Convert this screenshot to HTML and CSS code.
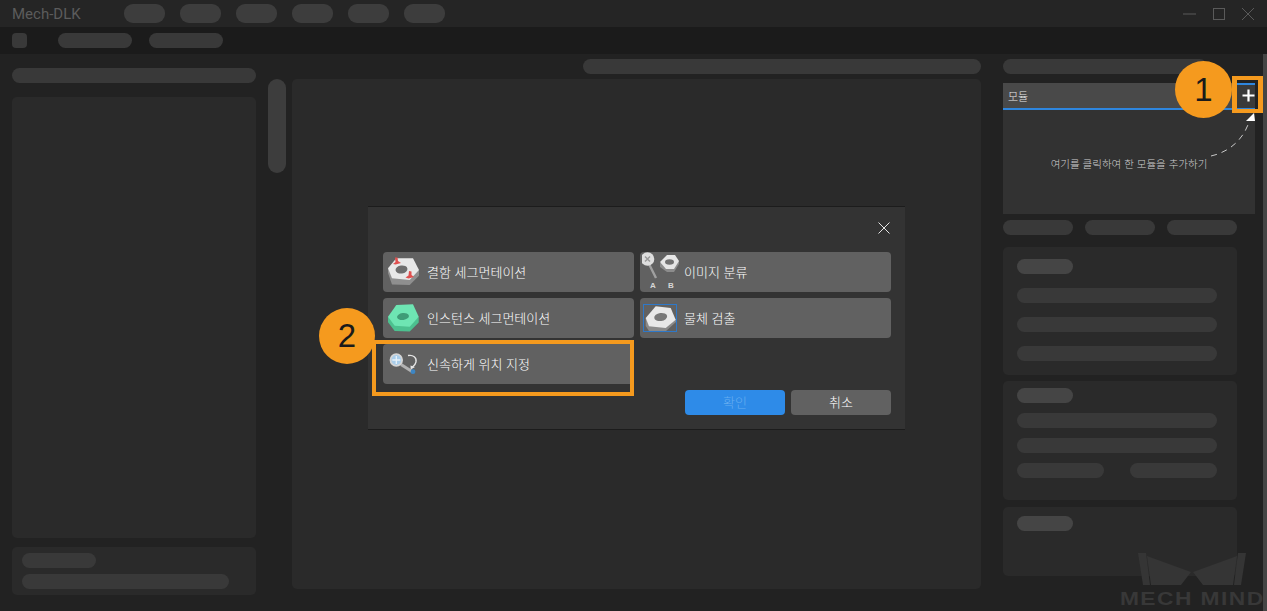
FILE: index.html
```html
<!DOCTYPE html>
<html lang="ko">
<head>
    <meta charset="UTF-8">
    <meta name="viewport" content="width=device-width, initial-scale=1.0">
    <title>Mech-DLK</title>
    <link rel="stylesheet" href="styles.css">
</head>
<body>
    <div class="app">
        <header class="titlebar">
            <span class="app-name">Mech-DLK</span>
            <nav class="menu">
                <span class="pill menu-item"></span>
                <span class="pill menu-item"></span>
                <span class="pill menu-item"></span>
                <span class="pill menu-item"></span>
                <span class="pill menu-item"></span>
                <span class="pill menu-item"></span>
            </nav>
            <div class="window-controls">
                <svg width="16" height="16" viewBox="0 0 16 16"><path d="M1 8h13" stroke="#5a5a5a" stroke-width="1"/></svg>
                <svg width="16" height="16" viewBox="0 0 16 16"><rect x="2.5" y="2.5" width="11" height="11" fill="none" stroke="#5a5a5a"/></svg>
                <svg width="16" height="16" viewBox="0 0 16 16"><path d="M2 2l12 12M14 2L2 14" stroke="#5a5a5a" stroke-width="1"/></svg>
            </div>
        </header>

        <div class="toolbar">
            <span class="tool-square"></span>
            <span class="pill tool-pill first"></span>
            <span class="pill tool-pill"></span>
        </div>

        <main class="workspace">
            <aside class="left-col">
                <span class="pill left-title"></span>
                <div class="panel left-main"></div>
                <div class="panel left-foot">
                    <span class="pill foot-short"></span>
                    <span class="pill foot-long"></span>
                </div>
            </aside>

            <div class="scroll-col"><span class="scroll-thumb"></span></div>

            <section class="center-col">
                <span class="pill center-title"></span>
                <div class="panel center-main"></div>
            </section>

            <aside class="right-col">
                <span class="pill right-title"></span>
                <div class="module-panel">
                    <div class="module-head">
                        <span class="module-label">모듈</span>
                        <span class="add-btn">
                            <svg width="13" height="13" viewBox="0 0 13 13"><path d="M6.5 0.5v12M0.5 6.5h12" stroke="#fff" stroke-width="2.2"/></svg>
                        </span>
                    </div>
                    <div class="module-body">
                        <p class="module-hint">여기를 클릭하여 한 모듈을 추가하기</p>
                    </div>
                    <svg class="hint-arrow" width="56" height="56" viewBox="0 0 56 56">
                        <path d="M12 46C30 42 44 30 50 12" fill="none" stroke="#c9c9c9" stroke-width="1" stroke-dasharray="6 5"/>
                        <path d="M47 11l8-8 1 8z" fill="#fff"/>
                    </svg>
                </div>
                <div class="tabs">
                    <span class="pill tab"></span>
                    <span class="pill tab"></span>
                    <span class="pill tab"></span>
                </div>
                <div class="card card-one">
                    <span class="pill card-title"></span>
                    <span class="pill card-line"></span>
                    <span class="pill card-line"></span>
                    <span class="pill card-line"></span>
                </div>
                <div class="card card-two">
                    <span class="pill card-title"></span>
                    <span class="pill card-line"></span>
                    <span class="pill card-line"></span>
                    <div class="card-split">
                        <span class="pill split-a"></span>
                        <span class="pill split-b"></span>
                    </div>
                </div>
                <div class="card card-three">
                    <span class="pill card-title"></span>
                </div>
            </aside>
            <div class="edge-strip"></div>
        </main>

        <!-- 워터마크 -->
        <div class="watermark">
            <svg width="108" height="32" viewBox="0 0 108 32">
                <path d="M0 0l8 0 4 32H5zM9 3l44 16-10 13H13zM108 0h-8l-4 32h7zM99 3L55 19l10 13h30z" fill="#353535"/>
            </svg>
            <span class="watermark-text">MECH MIND</span>
        </div>

        <div class="dialog">
            <button class="dialog-close" aria-label="close">
                <svg width="14" height="14" viewBox="0 0 14 14"><path d="M1.5 1.5l11 11M12.5 1.5l-11 11" stroke="#e4e4e4" stroke-width="1"/></svg>
            </button>
            <div class="module-grid">
                <button class="module-btn">
                    <svg class="module-icon" width="42" height="38" viewBox="0 0 42 38">
                        <path d="M3 15v5l4 11.500 17.700.5L34 22.700V17L24 22 7 20z" fill="#8f8f8f"/>
                        <path d="M3 15.300L11.300 5.300H28L34 17 24.700 27 7 25.300z" fill="#e8e8e8"/>
                        <ellipse cx="16.500" cy="16.500" rx="6" ry="4" fill="#6e6e6e" transform="rotate(-8 16.500 16.500)"/>
                        <path d="M10 4.500l2.500 0 .5 3.500 3 2-5.500 1.500L8 11l2.500-2zM24 18l2.500.5 0 3.500 2.500 2-5.500 1.500-3-1 3-2z" fill="#e0504f"/>
                    </svg>
                    <span>결함 세그먼테이션</span>
                </button>
                <button class="module-btn">
                    <svg class="module-icon" width="42" height="40" viewBox="0 0 42 40">
                        <path d="M7 12l7 14" stroke="#a0a0a0" stroke-width="2.400"/>
                        <circle cx="5.500" cy="7" r="6.800" fill="#dedede"/>
                        <path d="M3 4.500l5 5M8 4.500l-5 5" stroke="#9a9a9a" stroke-width="1.500"/>
                        <path d="M18 11v4l7 5h7l5-8V9z" fill="#8c8c8c"/>
                        <path d="M18 10l7-7h8l4 6-5 8h-8z" fill="#e6e6e6"/>
                        <ellipse cx="27.500" cy="10" rx="4.500" ry="2.800" fill="#727272"/>
                        <text x="8" y="36" class="icon-letter">A</text>
                        <text x="26" y="36" class="icon-letter">B</text>
                    </svg>
                    <span>이미지 분류</span>
                </button>
                <button class="module-btn">
                    <svg class="module-icon" width="42" height="38" viewBox="0 0 42 38">
                        <path d="M3 17.700v5.500L9.700 32 24.700 32.500 33.700 23.500V17.700L24.700 23z" fill="#4cc08f"/>
                        <path d="M3 17.700L11.300 6 28 5.300 33.700 17.700 24.700 27.700 9.700 26.700z" fill="#6ee5b3"/>
                        <ellipse cx="18" cy="17.500" rx="6" ry="3.500" fill="#3f9c77" transform="rotate(-8 18 17.500)"/>
                    </svg>
                    <span>인스턴스 세그먼테이션</span>
                </button>
                <button class="module-btn">
                    <span class="box-icon">
                        <svg width="32" height="26" viewBox="0 0 32 26">
                            <path d="M1.700 13v8L5 26l17 0 10-9v-3L22 20 5 18z" fill="#8a8a8a"/>
                            <path d="M1.700 13L11.700 1.300 26.700 3 31.700 14.700 21.700 23 5 21.300z" fill="#e8e8e8"/>
                            <ellipse cx="16.700" cy="12" rx="6.500" ry="4" fill="#787878" transform="rotate(-8 16.700 12)"/>
                        </svg>
                    </span>
                    <span>물체 검출</span>
                </button>
                <button class="module-btn">
                    <svg class="module-icon" width="42" height="38" viewBox="0 0 42 38">
                        <path d="M16 19.500l11 7" stroke="#b2b2b2" stroke-width="3"/>
                        <circle cx="28" cy="26.700" r="2.400" fill="#3d86c4"/>
                        <circle cx="11.300" cy="15" r="5.800" fill="#a9cdea" stroke="#d5d5d5" stroke-width="1.800"/>
                        <path d="M11.300 11v8M7.300 15h8" stroke="#e8f2fa" stroke-width="1.300"/>
                        <path d="M23 10.500c5-1 9 2 8 6.500-.4 2-1.500 3.500-3.500 5" fill="none" stroke="#e6e6e6" stroke-width="1.300"/>
                        <path d="M25.500 20.500l4.500 1.500-4.300 2.600z" fill="#e6e6e6"/>
                    </svg>
                    <span>신속하게 위치 지정</span>
                </button>
            </div>
            <div class="dialog-actions">
                <button class="action-btn ok">확인</button>
                <button class="action-btn">취소</button>
            </div>
        </div>

        <span class="callout callout-one">1</span>
        <span class="outline outline-one"></span>
        <span class="callout callout-two">2</span>
        <span class="outline outline-two"></span>
    </div>
</body>
</html>
```

FILE: styles.css
```css
* {
    margin: 0;
    padding: 0;
    box-sizing: border-box;
}

html, body {
    height: 100%;
    overflow: hidden;
}

body {
    font-family: "Noto Sans CJK KR", "Noto Sans", sans-serif;
    background: #222222;
    color: #ffffff;
}

.app {
    position: relative;
    width: 1267px;
    height: 611px;
    display: flex;
    flex-direction: column;
}

.pill {
    display: block;
    height: 15px;
    border-radius: 8px;
    background: #393939;
}

/* title bar */
.titlebar {
    height: 27px;
    flex: none;
    display: flex;
    align-items: center;
    padding: 0 11px 0 12px;
    background: #252525;
}

.app-name {
    width: 112px;
    font-family: Roboto, sans-serif;
    font-size: 15px;
    color: #5c5c5c;
}

.menu {
    display: flex;
    gap: 15px;
}

.menu-item {
    width: 41px;
    height: 19px;
    border-radius: 9px;
    background: #3d3d3d;
}

.window-controls {
    margin-left: auto;
    display: flex;
    gap: 13px;
}

.toolbar {
    height: 27px;
    flex: none;
    display: flex;
    align-items: center;
    padding: 0 12px 1px;
    background: #1b1b1b;
}

.tool-square {
    width: 15px;
    height: 15px;
    border-radius: 4px;
    background: #393939;
}

.tool-pill {
    width: 74px;
    margin-left: 17px;
}

.tool-pill.first {
    margin-left: 31px;
}

/* main columns */
.workspace {
    flex: 1;
    display: flex;
    background: #222222;
}

.panel {
    background: #2a2a2a;
    border-radius: 5px;
}

.left-col {
    width: 244px;
    margin-left: 12px;
    padding-top: 14px;
    display: flex;
    flex-direction: column;
}

.left-title {
    flex: none;
}

.left-main {
    height: 441px;
    margin-top: 14px;
}

.left-foot {
    height: 48px;
    margin-top: 9px;
    padding: 6px 27px 0 10px;
    display: flex;
    flex-direction: column;
    gap: 6px;
}

.foot-short {
    width: 74px;
}

.scroll-col {
    width: 18px;
    margin-left: 12px;
    padding-top: 25px;
}

.scroll-thumb {
    display: block;
    height: 94px;
    border-radius: 9px;
    background: #3d3d3d;
}

.center-col {
    width: 689px;
    margin-left: 6px;
    padding-top: 5px;
    display: flex;
    flex-direction: column;
    align-items: flex-end;
}

.center-title {
    width: 398px;
}

.center-main {
    width: 100%;
    height: 510px;
    margin-top: 5px;
}

.right-col {
    position: relative;
    width: 252px;
    margin-left: 22px;
    padding-top: 5px;
}

.right-title {
    width: 204px;
}

.module-panel {
    position: relative;
    height: 131px;
    margin-top: 9px;
    display: flex;
    flex-direction: column;
    background: #323232;
}

.module-head {
    height: 27px;
    flex: none;
    display: flex;
    align-items: center;
    justify-content: space-between;
    padding-left: 5px;
    background: #494949;
    border-bottom: 2px solid #2e86de;
}

.module-label {
    font-size: 11px;
    font-weight: 300;
    color: #e8e8e8;
}

.add-btn {
    width: 19px;
    height: 25px;
    display: flex;
    align-items: center;
    justify-content: flex-end;
    padding: 0 0 2px;
    background: #3a3a3a;
    border-top: 2px solid #2e86de;
}

.module-body {
    flex: 1;
    display: flex;
    justify-content: center;
    padding-top: 47px;
}

.module-hint {
    font-size: 10.5px;
    font-weight: 300;
    line-height: 14px;
    color: #d0d0d0;
    white-space: nowrap;
}

.hint-arrow {
    position: absolute;
    top: 27px;
    right: 0;
}

.tabs {
    width: 234px;
    margin-top: 6px;
    display: flex;
    justify-content: space-between;
}

.tab {
    width: 70px;
}

.card {
    width: 234px;
    padding: 12px 14px 0;
    background: #2a2a2a;
    border-radius: 5px;
}

.card .pill + .pill {
    margin-top: 14px;
}

.card-title {
    width: 56px;
    background: #454545;
}

.card-line {
    width: 200px;
}

.card-one {
    height: 128px;
    margin-top: 12px;
}

.card-two {
    height: 119px;
    margin-top: 6px;
    padding-top: 7px;
}

.card-two .pill + .pill {
    margin-top: 10px;
}

.card-split {
    width: 200px;
    margin-top: 10px;
    display: flex;
    justify-content: space-between;
}

.card-two .card-split .pill {
    margin-top: 0;
}

.split-a,
.split-b {
    width: 87px;
}

.card-three {
    height: 69px;
    margin-top: 7px;
    padding-top: 9px;
}

.edge-strip {
    position: absolute;
    top: 54px;
    right: 0;
    bottom: 0;
    width: 4px;
    background: #454545;
}

/* logo in the corner */
.watermark {
    position: absolute;
    left: 1119px;
    top: 553px;
    width: 146px;
    display: flex;
    flex-direction: column;
    align-items: center;
}

.watermark-text {
    margin-top: 4px;
    font-family: "Liberation Sans", sans-serif;
    font-size: 19px;
    line-height: 20px;
    font-weight: 700;
    letter-spacing: 1.2px;
    white-space: nowrap;
    color: #383838;
    transform: scaleX(1.2);
}

/* dialog */
.dialog {
    position: absolute;
    left: 368px;
    top: 206px;
    width: 537px;
    height: 224px;
    padding: 46px 14px 0 15px;
    background: #333333;
    border-top: 1px solid #1c1c1c;
    border-bottom: 1px solid #1c1c1c;
}

.dialog-close {
    position: absolute;
    top: 14px;
    right: 14px;
    width: 14px;
    height: 14px;
    border: none;
    background: none;
}

.module-grid {
    display: grid;
    grid-template-columns: 251px 251px;
    grid-auto-rows: 40px;
    column-gap: 6px;
    row-gap: 6px;
    margin-top: -1px;
}

.module-btn {
    display: flex;
    align-items: center;
    padding-left: 2px;
    border: none;
    border-radius: 4px;
    background: #616161;
    color: #ffffff;
    font-family: inherit;
    font-size: 13px;
    font-weight: 300;
    text-align: left;
}

.module-btn > span:last-child {
    margin-bottom: 2px;
}

.module-icon {
    flex: none;
}

.icon-letter {
    font-family: "Liberation Sans", sans-serif;
    font-size: 8px;
    font-weight: 700;
    fill: #d6d6d6;
}

.box-icon {
    flex: none;
    width: 34px;
    height: 28px;
    margin: 0 7px 0 1px;
    border: 1px solid #2e78c8;
    overflow: hidden;
}

.box-icon svg {
    display: block;
}

.dialog-actions {
    margin-top: 6px;
    display: flex;
    justify-content: flex-end;
    gap: 6px;
}

.action-btn {
    width: 100px;
    height: 25px;
    padding-bottom: 2px;
    border: none;
    border-radius: 4px;
    background: #616161;
    color: #ffffff;
    font-family: inherit;
    font-size: 13px;
    font-weight: 300;
}

.action-btn.ok {
    background: #2e8be8;
    color: #67aef0;
}

/* numbered callouts */
.callout {
    position: absolute;
    display: flex;
    align-items: center;
    justify-content: center;
    border-radius: 50%;
    background: #f59a1e;
    color: #1a1a1a;
    font-family: "Liberation Sans", sans-serif;
    font-size: 33px;
}

.callout-one {
    left: 1175px;
    top: 61px;
    width: 57px;
    height: 57px;
}

.callout-two {
    left: 319px;
    top: 308px;
    width: 56px;
    height: 56px;
}

.outline {
    position: absolute;
    border: 4px solid #f59a1e;
}

.outline-one {
    left: 1232px;
    top: 76px;
    width: 31px;
    height: 37px;
    border-width: 4px 5px;
}

.outline-two {
    left: 372px;
    top: 340px;
    width: 262px;
    height: 56px;
}
```
